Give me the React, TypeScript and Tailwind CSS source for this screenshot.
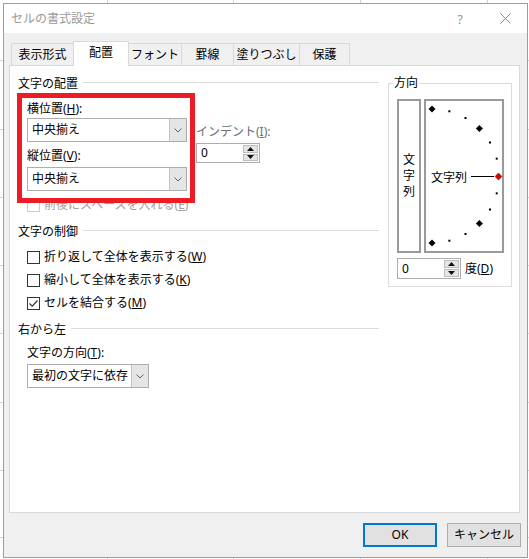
import React from 'react';

const cols = [107, 233, 360, 487];
const rows = [60, 129, 197, 265, 333, 402, 470, 537];

function Chevron() {
    return (
        <svg width="8" height="5" viewBox="0 0 8 5">
            <path d="M0.5 0.5 L4 4 L7.5 0.5" fill="none" stroke="#606060" strokeWidth="1" />
        </svg>
    );
}

function Combo({ text, className }: { text: string; className: string }) {
    return (
        <div className={`flex h-[24px] border border-[#adadad] bg-white ${className}`}>
            <span className="flex-1 whitespace-nowrap pl-[4px] leading-[22px]">{text}</span>
            <span className="flex w-[17px] items-center justify-center border-l border-[#c4c4c4] bg-[#e5e5e5]">
                <Chevron />
            </span>
        </div>
    );
}

function Spinner({ className }: { className: string }) {
    return (
        <div className={`flex w-[64px] border border-[#adadad] bg-white ${className}`}>
            <span className="flex flex-1 items-center pl-[4px]">0</span>
            <span className="my-px mr-px flex w-[15px] flex-col gap-px">
                <span className="flex flex-1 items-center justify-center border border-[#bcbcbc] bg-[#e5e5e5]">
                    <svg width="7" height="4" viewBox="0 0 7 4"><path d="M3.5 0 L7 4 L0 4 Z" fill="#111" /></svg>
                </span>
                <span className="flex flex-1 items-center justify-center border border-[#bcbcbc] bg-[#e5e5e5]">
                    <svg width="7" height="4" viewBox="0 0 7 4"><path d="M0 0 L7 0 L3.5 4 Z" fill="#111" /></svg>
                </span>
            </span>
        </div>
    );
}

function Group({ title }: { title: string }) {
    return (
        <div className="ml-[1px] flex h-[16px] items-center">
            <span className="whitespace-nowrap">{title}</span>
            <span className="mb-[4px] ml-[5px] h-px flex-1 bg-[#dcdcdc]" />
        </div>
    );
}

function Check({ children, checked = false, disabled = false, className = '' }: { children: React.ReactNode; checked?: boolean; disabled?: boolean; className?: string }) {
    return (
        <div className={`ml-[10px] flex h-[16px] items-center ${disabled ? 'text-[#a0a0a0]' : ''} ${className}`}>
            <span className={`flex h-[13px] w-[13px] items-center justify-center border bg-white ${disabled ? 'border-[#cccccc]' : 'border-[#333333]'}`}>
                {checked && (
                    <svg width="11" height="11" viewBox="0 0 11 11">
                        <path d="M1.5 5.5 L4.2 8.2 L9.5 2.5" fill="none" stroke="#333" strokeWidth="1.2" />
                    </svg>
                )}
            </span>
            <span className="ml-[4px] whitespace-nowrap">{children}</span>
        </div>
    );
}

function Dial() {
    const cx = 8, cy = 77, r = 67;
    const at = (deg: number) => {
        const a = (deg * Math.PI) / 180;
        return [cx + r * Math.cos(a), cy - r * Math.sin(a)];
    };
    const diamond = (x: number, y: number) => `${x},${y - 3.5} ${x + 3.5},${y} ${x},${y + 3.5} ${x - 3.5},${y}`;

    return (
        <svg width="80" height="154" viewBox="0 0 80 154" className="absolute left-[-2px] top-[-2px]">
            {[90, 45, -45, -90].map((d) => {
                const [x, y] = at(d);
                return <polygon key={d} points={diamond(x, y)} fill="#000" />;
            })}
            {[75, 60, 30, 15, -15, -30, -60, -75].map((d) => {
                const [x, y] = at(d);
                return <rect key={d} x={x - 1} y={y - 1} width="2" height="2" fill="#000" />;
            })}
            <line x1="47" y1="77.5" x2="70" y2="77.5" stroke="#000" strokeWidth="1" />
            <polygon points={diamond(74.5, 77.5)} fill="#e00000" stroke="#600" strokeWidth="0.5" />
            <text x="7" y="77.5" dominantBaseline="central" fontSize="12" fill="#000" fontFamily="'Noto Sans CJK JP', sans-serif">文字列</text>
        </svg>
    );
}

export default function App() {
    return (
        <div className="relative h-[559px] w-[529px] overflow-hidden bg-white font-['Noto_Sans','Noto_Sans_CJK_JP',sans-serif] text-[12px] leading-[16px] text-black">
            {/* spreadsheet grid behind the dialog */}
            {cols.map((x) => (
                <div key={`c${x}`} className="absolute top-0 h-full w-px bg-[#d4d4d4]" style={{ left: x }} />
            ))}
            {rows.map((y) => (
                <div key={`r${y}`} className="absolute left-0 h-px w-full bg-[#d4d4d4]" style={{ top: y }} />
            ))}

            <div className="relative z-10 ml-[3px] mt-[3px] flex h-[555px] w-[525px] flex-col border border-[#9d9d9d] bg-[#f0f0f0]">
                {/* title bar */}
                <div className="flex h-[29px] items-center bg-white pl-[7px] text-[#999999]">
                    <span>セルの書式設定</span>
                    <span className="ml-auto text-[13px]">?</span>
                    <svg width="11" height="11" viewBox="0 0 11 11" className="ml-[37px] mr-[16px]">
                        <path d="M0.5 0.5 L10.5 10.5 M10.5 0.5 L0.5 10.5" stroke="#8a8a8a" strokeWidth="1" />
                    </svg>
                </div>

                {/* tabs */}
                <div className="ml-[7px] mt-[8px] flex h-[24px] items-end">
                    <div className="flex h-[22px] w-[62px] items-center justify-center border-l border-t border-[#d9d9d9]">表示形式</div>
                    <div className="relative z-10 -mb-px flex h-[25px] w-[56px] items-center justify-center border-l border-r border-t border-[#d9d9d9] bg-white pb-[2px]">配置</div>
                    <div className="flex h-[22px] w-[52px] items-center justify-center border-t border-[#d9d9d9]">フォント</div>
                    <div className="flex h-[22px] w-[52px] items-center justify-center border-l border-t border-[#d9d9d9]">罫線</div>
                    <div className="flex h-[22px] w-[66px] items-center justify-center border-l border-t border-[#d9d9d9]">塗りつぶし</div>
                    <div className="flex h-[22px] w-[51px] items-center justify-center border-l border-r border-t border-[#d9d9d9]">保護</div>
                </div>

                {/* panel */}
                <div className="ml-[5px] flex h-[448px] w-[511px] items-start border border-[#d9d9d9] bg-white pl-[7px] pt-[9px]">
                    <div className="flex w-[362px] flex-col pt-[1px]">
                        <Group title="文字の配置" />
                        <div className="mt-[1px] flex items-start">
                            <div className="relative z-10 h-[110px] w-[178px] border-[5px] border-[#ed1c24] pl-[5px] pt-[3px]">
                                <div className="h-[16px]">横位置(<u>H</u>):</div>
                                <Combo text="中央揃え" className="mt-[1px] w-[160px]" />
                                <div className="mt-[6px] h-[16px]">縦位置(<u>V</u>):</div>
                                <Combo text="中央揃え" className="mt-[3px] w-[160px]" />
                            </div>
                            <div className="ml-[1px] mt-[31px] flex flex-col">
                                <div className="h-[16px] whitespace-nowrap text-[#6d6d6d]">インデント(<u>I</u>):</div>
                                <Spinner className="mt-[3px] h-[20px]" />
                            </div>
                        </div>
                        <Check disabled className="-mt-[6px]">前後にスペースを入れる(<u>E</u>)</Check>

                        <div className="mt-[11px]"><Group title="文字の制御" /></div>
                        <Check className="mt-[9px]">折り返して全体を表示する(<u>W</u>)</Check>
                        <Check className="mt-[7px]">縮小して全体を表示する(<u>K</u>)</Check>
                        <Check checked className="mt-[7px]">セルを結合する(<u>M</u>)</Check>

                        <div className="mt-[11px]"><Group title="右から左" /></div>
                        <div className="ml-[10px] mt-[7px] h-[16px]">文字の方向(<u>T</u>):</div>
                        <Combo text="最初の文字に依存" className="ml-[10px] mt-[3px] w-[122px]" />
                    </div>

                    <fieldset className="ml-[9px] h-[212px] w-[124px] border border-[#dcdcdc]">
                        <legend className="ml-[4px] px-px leading-[16px]">方向</legend>
                        <div className="ml-[8px] mt-[8px] flex gap-[3px]">
                            <div className="flex h-[154px] w-[24px] flex-col items-center justify-center border-2 border-[#9a9a9a] leading-[16px]">
                                <span className="h-[16px]">文</span>
                                <span className="h-[16px]">字</span>
                                <span className="h-[16px]">列</span>
                            </div>
                            <div className="relative h-[154px] w-[80px] border-2 border-[#9a9a9a]">
                                <Dial />
                            </div>
                        </div>
                        <div className="ml-[8px] mt-[5px] flex items-center">
                            <Spinner className="h-[21px]" />
                            <span className="ml-[4px]">度(<u>D</u>)</span>
                        </div>
                    </fieldset>
                </div>

                {/* buttons */}
                <div className="mt-[10px] flex justify-end gap-[10px] pr-[6px]">
                    <button className="flex h-[24px] w-[74px] items-center justify-center border-2 border-[#0078d7] bg-[#e1e1e1]">OK</button>
                    <button className="flex h-[24px] w-[74px] items-center justify-center border border-[#adadad] bg-[#e1e1e1]">キャンセル</button>
                </div>
            </div>
        </div>
    );
}
